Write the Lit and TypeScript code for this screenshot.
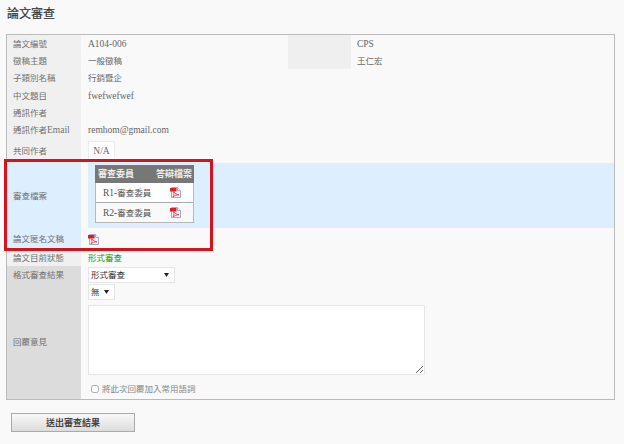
import { LitElement, html, css, svg } from "lit";
import { customElement } from "lit/decorators.js";

const pdf = svg`<svg class="pdf" width="11" height="11" viewBox="0 0 11 11" xmlns="http://www.w3.org/2000/svg">
<path d="M1.500 .5H7.500L10.500 3.500V10.500H1.500Z" fill="#f2f2fa" stroke="#a8a8c8"/>
<path d="M7.500 .5V3.500H10.500" fill="#fff" stroke="#a8a8c8"/>
<rect x="0" y="1" width="6.500" height="3.500" fill="#dc1f28"/>
<path d="M3.500 4.500C5 6.500 6.500 7.500 9 7.800C6.500 7.800 4.500 8.500 3 10C4 8.500 4.200 6.500 3.500 4.500Z" fill="none" stroke="#e0323a" stroke-width=".8"/>
</svg>`;

const arrow = "url(\"data:image/svg+xml,%3Csvg xmlns='http://www.w3.org/2000/svg' width='5' height='4'%3E%3Cpath d='M0 0H5L2.500 4Z' fill='%23222'/%3E%3C/svg%3E\")";

@customElement("app-root")
export class AppRoot extends LitElement {
  static styles = css`
    :host { display: block; width: 624px; height: 444px; background: #f9f9f9; color: #777; font: 8.500px/14px "Liberation Serif", "Noto Sans CJK TC", serif; overflow: hidden; box-sizing: border-box; padding: 7px 6px 0 6px; position: relative; }
    h1 { margin: 0 0 12px 1px; font-size: 12px; line-height: 15px; font-weight: 400; color: #333; -webkit-text-stroke: .2px #333; }
    .en { font-size: 9.500px; }
    .panel { width: 609px; height: 366px; box-sizing: border-box; border: 1px solid #bbb; display: grid; grid-template-columns: 74px 1fr; grid-template-rows: 17px 17px 18px 17px 17px 17px 25px 65px 22px 16px 18px 1fr; }
    .l { padding-left: 6px; display: flex; align-items: center; background: #f0f0f0; color: #707070; }
    .v { padding-left: 7px; display: flex; align-items: center; min-width: 0; color: #666; }
    .dark { background: #dcdcdc; }
    .blue { background: #ddeeff; }
    .bluebox { background: #ddeeff; margin-left: 7px; padding: 2px 0 0 7px; display: flex; align-items: flex-start; }
    .split { display: grid; grid-template-columns: 207px 63px 1fr; align-items: center; height: 100%; color: #666; }
    .split > span:first-child { padding-left: 7px; }
    .gray { background: #efefef; align-self: stretch; }
    .split > span:last-child { padding-left: 6px; }
    .na { background: #fff; border: 1px solid #ececec; width: 27px; height: 20px; box-sizing: border-box; display: flex; align-items: center; justify-content: center; }
    .tbl { width: 99px; border: 1px solid #b8b8b8; border-top: 0; background: #fff; box-sizing: border-box; }
    .tr { display: grid; grid-template-columns: 1fr 23px; height: 19px; align-items: center; color: #555; }
    .tr + .tr { border-top: 1px solid #aaa; background: #f9f9f9; }
    .th { background: #777; color: #eee; height: 18px; margin: 0 -1px; padding: 0 2px 0 3px; display: flex; justify-content: space-between; align-items: center; font-weight: 700; font-size: 9px; }
    .td { padding-left: 7px; }
    .ic { display: flex; }
    .pdf { display: block; }
    .green { color: #1a9a1a; }
    select { appearance: none; -webkit-appearance: none; font: 8.500px "Liberation Serif", "Noto Sans CJK TC", serif; color: #333; background: #fff ${css([arrow] as any)} no-repeat right 5px center; border: 1px solid #e6e6e6; padding: 0 0 0 2px; box-sizing: border-box; border-radius: 0; }
    .s1 { width: 87px; height: 16px; }
    .s2 { width: 27px; height: 16px; display: block; margin-bottom: 5px; }
    .reply { flex-direction: column; align-items: flex-start; justify-content: flex-start; }
    textarea { width: 337px; height: 70px; box-sizing: border-box; background: #fff; border: 1px solid #e6e6e6; margin: 0; display: block; flex: none; }
    .chk { display: flex; align-items: center; gap: 3px; margin: 7px 0 0 3px; color: #888; }
    .chk input { margin: 0; width: 8px; height: 8px; opacity: .6; }
    button { display: block; margin: 13px 0 0 5px; width: 124px; height: 19px; font: 9px "Liberation Serif", "Noto Sans CJK TC", serif; font-weight: 700; color: #444; background: linear-gradient(#f8f8f8, #dcdcdc); border: 1px solid #aaa; padding: 0; }
    .mark { position: absolute; left: 4px; top: 159px; width: 209px; height: 92px; box-sizing: border-box; border: 3px solid #d2141e; pointer-events: none; }
  `;

  render() {
    return html`
      <h1>論文審查</h1>
      <div class="panel">
        <div class="l">論文編號</div><div class="split"><span class="en">A104-006</span><span class="gray"></span><span class="en">CPS</span></div>
        <div class="l">徵稿主題</div><div class="split"><span>一般徵稿</span><span class="gray"></span><span>王仁宏</span></div>
        <div class="l">子類別名稱</div><div class="v">行銷暨企</div>
        <div class="l">中文題目</div><div class="v"><span class="en">fwefwefwef</span></div>
        <div class="l">通訊作者</div><div class="v"></div>
        <div class="l"><span>通訊作者<span class="en">Email</span></span></div><div class="v"><span class="en">remhom@gmail.com</span></div>
        <div class="l">共同作者</div><div class="v"><div class="na"><span class="en">N/A</span></div></div>
        <div class="l blue">審查檔案</div>
        <div class="bluebox"><div class="tbl">
          <div class="th"><span>審查委員</span><span>答辯檔案</span></div>
          <div class="tr"><div class="td"><span class="en">R1-</span>審查委員</div><div class="ic">${pdf}</div></div>
          <div class="tr"><div class="td"><span class="en">R2-</span>審查委員</div><div class="ic">${pdf}</div></div>
        </div></div>
        <div class="l blue">論文匿名文稿</div><div class="v">${pdf}</div>
        <div class="l">論文目前狀態</div><div class="v green">形式審查</div>
        <div class="l dark">格式審查結果</div><div class="v"><select class="s1"><option>形式審查</option></select></div>
        <div class="l dark">回覆意見</div>
        <div class="v reply">
          <select class="s2"><option>無</option></select>
          <textarea></textarea>
          <label class="chk"><input type="checkbox" />將此次回覆加入常用語詞</label>
        </div>
      </div>
      <button>送出審查結果</button>
      <div class="mark"></div>
    `;
  }
}
